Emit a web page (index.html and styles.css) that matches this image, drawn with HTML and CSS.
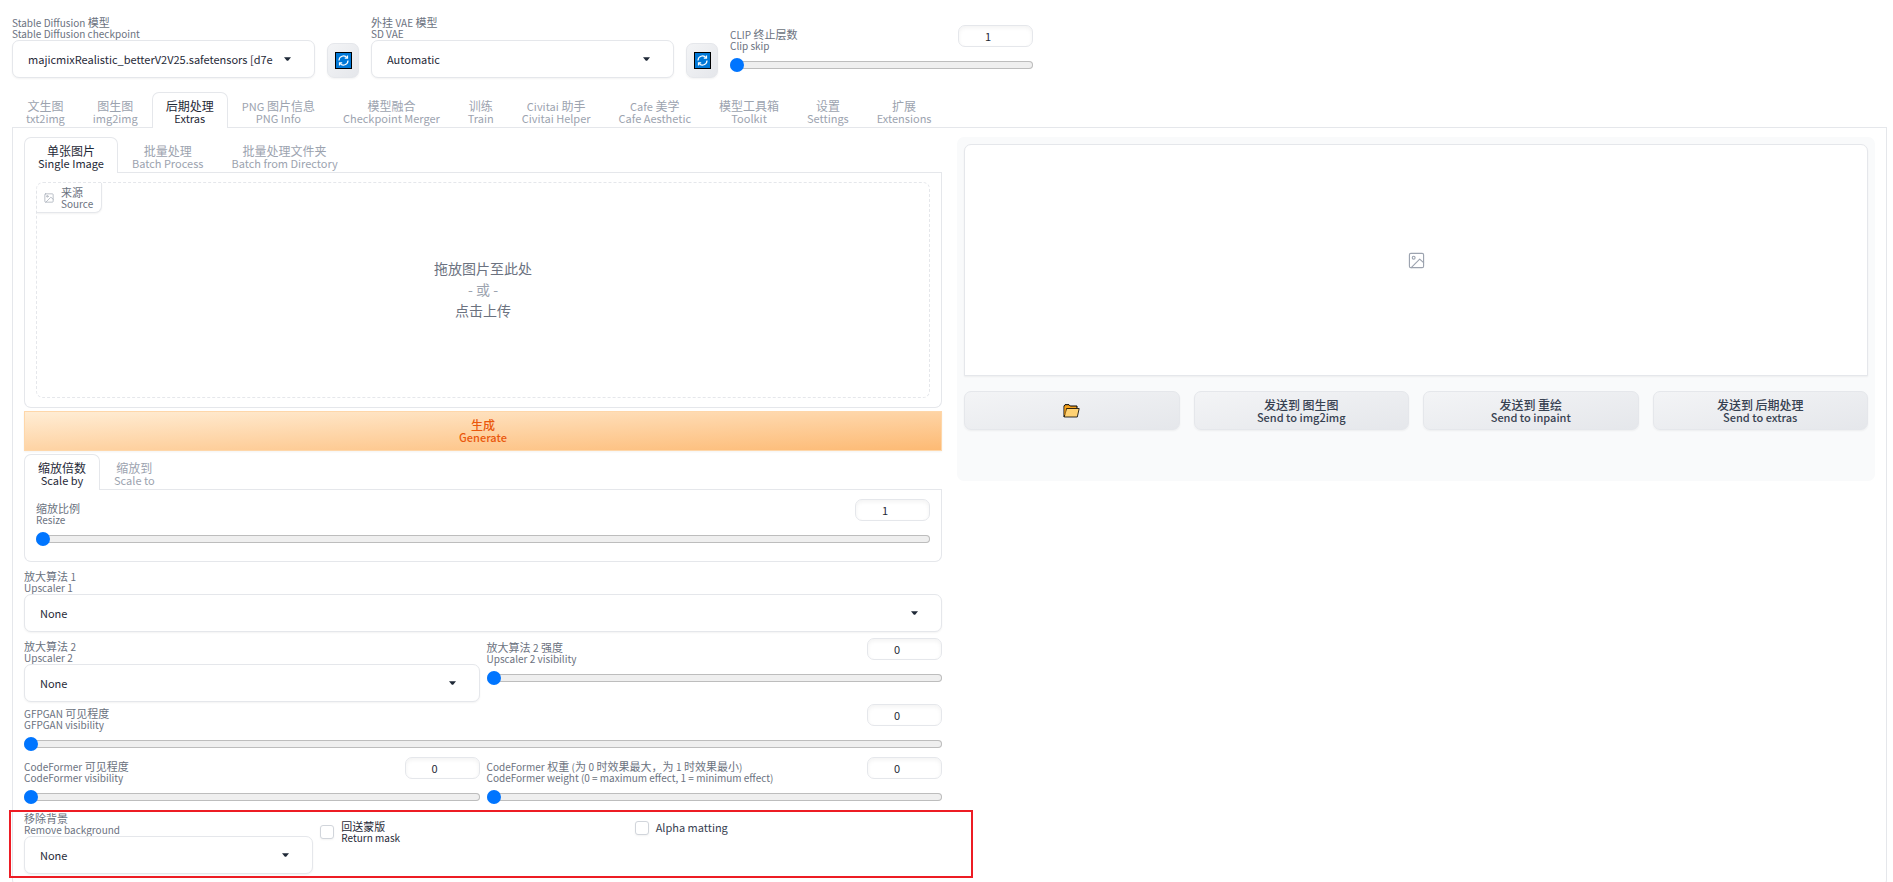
FILE: index.html
```html
<!DOCTYPE html>
<html lang="zh-CN">
<head>
<meta charset="utf-8">
<title>Stable Diffusion</title>
<link rel="stylesheet" href="styles.css">
</head>
<body>
<svg class="defs" aria-hidden="true">
  <symbol id="caret" viewBox="0 0 8 4"><path d="M0 0h8L5 3.6Q4 4.4 3 3.6Z" fill="#1f2937"/></symbol>
  <symbol id="picture" viewBox="0 0 24 24"><g fill="none" stroke="currentColor" stroke-width="1.6" stroke-linecap="round" stroke-linejoin="round"><rect x="2" y="2" width="20" height="20" rx="2"/><circle cx="8" cy="8" r="2"/><path d="M22 15l-5.500-5L4.500 22"/></g></symbol>
  <symbol id="refresh" viewBox="0 0 17 17"><rect x=".5" y=".5" width="16" height="16" fill="#0078d7" stroke="#000"/><g fill="none" stroke="#fff" stroke-width="1.200"><path d="M4 8.500A4.500 4.500 0 0 1 12 5.700"/><path d="M13 8.500A4.500 4.500 0 0 1 5 11.300"/><path d="M12.500 3.500v2.700H9.800M4.500 13.500v-2.700h2.700"/></g></symbol>
  <symbol id="folder" viewBox="0 0 17 14"><path d="M1 13V2l1-1.300h4L7.200 2H14v2.500" fill="#f5a11c" stroke="#000"/><path d="M1.200 13L3.500 4.500h12.700L14.300 13Z" fill="#ffd273" stroke="#000" stroke-width=".8"/><path d="M2 11V2.500" fill="none" stroke="#f5a11c" stroke-width="1"/></symbol>
</svg>

<header class="quick">
  <div class="dropdown quick-field">
    <label class="caption" for="ckpt"><span><i>Stable Diffusion</i> 模型</span><small>Stable Diffusion checkpoint</small></label>
    <div class="select-box"><select id="ckpt"><option>majicmixRealistic_betterV2V25.safetensors [d7e</option></select><svg class="caret"><use href="#caret"/></svg></div>
  </div>
  <button class="tool" aria-label="Refresh checkpoints"><svg><use href="#refresh"/></svg></button>
  <div class="dropdown quick-field">
    <label class="caption" for="vae"><span>外挂 <i>VAE</i> 模型</span><small>SD VAE</small></label>
    <div class="select-box"><select id="vae"><option>Automatic</option></select><svg class="caret"><use href="#caret"/></svg></div>
  </div>
  <button class="tool" aria-label="Refresh VAE"><svg><use href="#refresh"/></svg></button>
  <div class="slider quick-field quick-slider">
    <div class="slider-head"><label class="caption" for="clip"><span><i>CLIP</i> 终止层数</span><small>Clip skip</small></label><input type="number" value="1" aria-label="Clip skip value"></div>
    <input id="clip" type="range" min="1" max="12" value="1">
  </div>
</header>

<nav class="tabs main-tabs">
  <button class="tab"><span>文生图</span><small>txt2img</small></button>
  <button class="tab"><span>图生图</span><small>img2img</small></button>
  <button class="tab selected"><span>后期处理</span><small>Extras</small></button>
  <button class="tab"><span><i>PNG</i> 图片信息</span><small>PNG Info</small></button>
  <button class="tab"><span>模型融合</span><small>Checkpoint Merger</small></button>
  <button class="tab"><span>训练</span><small>Train</small></button>
  <button class="tab"><span><i>Civitai</i> 助手</span><small>Civitai Helper</small></button>
  <button class="tab"><span><i>Cafe</i> 美学</span><small>Cafe Aesthetic</small></button>
  <button class="tab"><span>模型工具箱</span><small>Toolkit</small></button>
  <button class="tab"><span>设置</span><small>Settings</small></button>
  <button class="tab"><span>扩展</span><small>Extensions</small></button>
</nav>

<main class="page">
  <section class="left">
    <div class="tabs">
      <button class="tab selected"><span>单张图片</span><small>Single Image</small></button>
      <button class="tab"><span>批量处理</span><small>Batch Process</small></button>
      <button class="tab"><span>批量处理文件夹</span><small>Batch from Directory</small></button>
    </div>
    <div class="panel upload-panel">
      <div class="upload">
        <div class="badge"><svg><use href="#picture"/></svg><div class="caption"><span>来源</span><small>Source</small></div></div>
        <p>拖放图片至此处</p>
        <p class="or">- 或 -</p>
        <p>点击上传</p>
      </div>
    </div>

    <button class="generate"><span>生成</span><small>Generate</small></button>

    <div class="tabs">
      <button class="tab selected"><span>缩放倍数</span><small>Scale by</small></button>
      <button class="tab"><span>缩放到</span><small>Scale to</small></button>
    </div>
    <div class="panel resize-panel">
      <div class="slider">
        <div class="slider-head"><label class="caption" for="resize"><span>缩放比例</span><small>Resize</small></label><input type="number" value="1" aria-label="Resize value"></div>
        <input id="resize" type="range" min="1" max="8" value="1">
      </div>
    </div>

    <div class="dropdown row">
      <label class="caption" for="up1"><span>放大算法 <i>1</i></span><small>Upscaler 1</small></label>
      <div class="select-box"><select id="up1"><option>None</option></select><svg class="caret"><use href="#caret"/></svg></div>
    </div>

    <div class="row halves">
      <div class="dropdown">
        <label class="caption" for="up2"><span>放大算法 <i>2</i></span><small>Upscaler 2</small></label>
        <div class="select-box"><select id="up2"><option>None</option></select><svg class="caret"><use href="#caret"/></svg></div>
      </div>
      <div class="slider">
        <div class="slider-head"><label class="caption" for="up2v"><span>放大算法 <i>2</i> 强度</span><small>Upscaler 2 visibility</small></label><input type="number" value="0" aria-label="Upscaler 2 visibility value"></div>
        <input id="up2v" type="range" min="0" max="1" value="0">
      </div>
    </div>

    <div class="slider row tight">
      <div class="slider-head"><label class="caption" for="gfp"><span><i>GFPGAN</i> 可见程度</span><small>GFPGAN visibility</small></label><input type="number" value="0" aria-label="GFPGAN visibility value"></div>
      <input id="gfp" type="range" min="0" max="1" value="0">
    </div>

    <div class="row halves">
      <div class="slider">
        <div class="slider-head"><label class="caption" for="cfv"><span><i>CodeFormer</i> 可见程度</span><small>CodeFormer visibility</small></label><input type="number" value="0" aria-label="CodeFormer visibility value"></div>
        <input id="cfv" type="range" min="0" max="1" value="0">
      </div>
      <div class="slider">
        <div class="slider-head"><label class="caption" for="cfw"><span><i>CodeFormer</i> 权重 <i>(</i>为 <i>0</i> 时效果最大，为 <i>1</i> 时效果最小<i>)</i></span><small>CodeFormer weight (0 = maximum effect, 1 = minimum effect)</small></label><input type="number" value="0" aria-label="CodeFormer weight value"></div>
        <input id="cfw" type="range" min="0" max="1" value="0">
      </div>
    </div>

    <div class="row background-row">
      <div class="dropdown">
        <label class="caption" for="rembg"><span>移除背景</span><small>Remove background</small></label>
        <div class="select-box"><select id="rembg"><option>None</option></select><svg class="caret"><use href="#caret"/></svg></div>
      </div>
      <label class="check"><input type="checkbox"><span class="caption"><span>回送蒙版</span><small>Return mask</small></span></label>
      <label class="check"><input type="checkbox"><span class="check-text">Alpha matting</span></label>
      <div class="highlight"></div>
    </div>
  </section>

  <section class="results">
    <div class="gallery"><svg><use href="#picture"/></svg></div>
    <div class="actions">
      <button class="action" aria-label="Open folder"><svg><use href="#folder"/></svg></button>
      <button class="action"><span>发送到 图生图</span><small>Send to img2img</small></button>
      <button class="action"><span>发送到 重绘</span><small>Send to inpaint</small></button>
      <button class="action"><span>发送到 后期处理</span><small>Send to extras</small></button>
    </div>
  </section>
</main>
</body>
</html>
```
FILE: styles.css
```css
* { box-sizing: border-box; }
html { height: 100%; overflow: hidden; }
body {
  margin: 0;
  padding: 14px 6px 0 12px;
  background: #fff;
  color: #1f2937;
  font-family: "Noto Sans CJK SC", sans-serif;
  font-size: 12px;
}
button, input, select { font: inherit; color: inherit; margin: 0; }
p { margin: 0; }
.defs { display: none; }

/* bilingual labels: Latin runs are set one step smaller than the Chinese */
.caption, .tab, .generate, .action { line-height: 12px; }
.caption span, .caption small,
.tab span, .tab small,
.generate span, .generate small,
.action span, .action small { display: block; height: 12px; white-space: nowrap; }
.tab small, .tab i, .generate small, .action small { font-size: 11px; }
.caption { display: block; font-size: 11px; color: #6b7280; }
.caption small, .caption i { font-size: 10px; }
i { font-style: normal; }

/* dropdowns */
.dropdown { padding-top: 2px; }
.select-box { position: relative; }
.select-box select {
  display: block;
  width: 100%;
  height: 38px;
  padding: 0 38px 0 15px;
  border: 1px solid #e5e7eb;
  border-radius: 7px;
  background: #fff;
  box-shadow: 0 1px 2px rgba(0, 0, 0, .05);
  font-size: 11px;
  appearance: none;
}
.caret {
  position: absolute;
  top: 17px;
  right: 24px;
  width: 7px;
  height: 4px;
  pointer-events: none;
}

/* sliders */
.slider-head {
  display: flex;
  justify-content: space-between;
  align-items: flex-start;
}
.slider-head .caption { padding: 3px 0 6px; }
input[type="number"] {
  width: 75px;
  height: 22px;
  padding: 0 6px;
  border: 1px solid #e5e7eb;
  border-radius: 7px;
  background: #fff;
  box-shadow: inset 0 2px 4px rgba(0, 0, 0, .05);
  font-size: 11px;
  text-align: center;
}
input[type="number"]::-webkit-inner-spin-button { opacity: 0; }
input[type="range"] {
  display: block;
  width: 100%;
  height: 14px;
  background: none;
  appearance: none;
}
input[type="range"]::-webkit-slider-runnable-track {
  height: 8px;
  border-radius: 4px;
  background: #efefef;
  box-shadow: inset 0 0 0 1px #bdbdbd;
}
input[type="range"]::-webkit-slider-thumb {
  width: 14px;
  height: 14px;
  margin-top: -3px;
  border-radius: 50%;
  background: #0075ff;
  appearance: none;
}

/* quick settings */
.quick { display: flex; align-items: flex-end; gap: 12px; margin-bottom: 14px; }
.quick-field { width: 303px; }
.quick-slider { align-self: flex-start; padding-top: 11px; }
.tool {
  display: flex;
  align-items: center;
  justify-content: center;
  width: 32px;
  height: 35px;
  padding: 0;
  border: 1px solid #e5e7eb;
  border-radius: 7px;
  background: linear-gradient(to bottom right, #f3f4f6, #e5e7eb);
  box-shadow: 0 1px 2px rgba(0, 0, 0, .05);
}
.tool svg { width: 17px; height: 17px; }

/* tabs */
.tabs { display: flex; border-bottom: 1px solid #e5e7eb; }
.tab {
  margin-bottom: -1px;
  padding: 7px 13px 4px;
  border: 1px solid transparent;
  border-bottom: 0;
  border-radius: 7px 7px 0 0;
  background: none;
  color: #9ca3af;
  text-align: center;
}
.tab.selected { border-color: #e5e7eb; background: #fff; color: #1f2937; }

/* page */
.page {
  display: grid;
  grid-template-columns: 1fr 1fr;
  gap: 15px;
  align-items: start;
  padding: 9px 11px 12px;
  border: 1px solid #e5e7eb;
  border-top: 0;
  border-radius: 0 0 7px 7px;
}
.left { min-width: 0; }
.panel {
  padding: 9px 11px;
  border: 1px solid #e5e7eb;
  border-top: 0;
  border-radius: 0 0 7px 7px;
}
.upload {
  position: relative;
  display: flex;
  flex-direction: column;
  align-items: center;
  justify-content: center;
  height: 216px;
  padding-bottom: 2px;
  border: 1px dashed #e5e7eb;
  border-radius: 7px;
  color: #6b7280;
  font-size: 14px;
  line-height: 21px;
}
.upload .or { color: #9ca3af; }
.badge {
  position: absolute;
  top: 0;
  left: 0;
  display: flex;
  align-items: center;
  gap: 7px;
  height: 30px;
  padding: 0 8px 0 7px;
  border: 1px solid #e5e7eb;
  border-width: 0 1px 1px 0;
  border-radius: 7px 0 7px 0;
  background: #fff;
  box-shadow: 0 1px 2px rgba(0, 0, 0, .05);
}
.badge svg { width: 10px; height: 10px; color: #9ca3af; }
.generate {
  display: block;
  width: 100%;
  height: 40px;
  margin: 3px 0;
  padding: 0;
  border: 1px solid #fed7aa;
  background: linear-gradient(to bottom right, #ffedd5, #fdba74);
  box-shadow: 0 1px 2px rgba(0, 0, 0, .05);
  color: #ea580c;
  font-weight: 500;
}
.resize-panel { padding-bottom: 15px; }
.row { margin-top: 6px; }
.row.tight { margin-top: 2px; }
.halves { display: grid; grid-template-columns: 1fr 1fr; gap: 7px; }
.background-row {
  position: relative;
  display: grid;
  grid-template-columns: 289fr 307fr 307fr;
  gap: 7px;
}
.check { display: flex; align-items: center; align-self: start; gap: 7px; padding-top: 10px; }
.check .caption { color: #1f2937; }
.check-text { font-size: 11px; line-height: 15px; color: #374151; }
.check input {
  width: 14px;
  height: 14px;
  border: 1px solid #d1d5db;
  border-radius: 3px;
  background: #fff;
  box-shadow: 0 1px 2px rgba(0, 0, 0, .05);
  appearance: none;
}
.highlight {
  position: absolute;
  inset: 0 -31px -4px -15px;
  border: 2px solid #ed1c24;
  pointer-events: none;
}

/* results */
.results { min-width: 0; padding: 7px 7px 51px; border-radius: 7px; background: #f9fafb; }
.gallery {
  display: flex;
  align-items: center;
  justify-content: center;
  height: 232px;
  border: 1px solid #e5e7eb;
  border-radius: 7px 7px 0 0;
  background: #fff;
  box-shadow: 0 1px 2px rgba(0, 0, 0, .05);
  color: #9ca3af;
}
.gallery svg { width: 17px; height: 17px; }
.actions { display: grid; grid-template-columns: repeat(4, 1fr); gap: 14px; margin-top: 15px; }
.action {
  height: 39px;
  padding: 0;
  border: 1px solid #e5e7eb;
  border-radius: 7px;
  background: linear-gradient(to bottom right, #f3f4f6, #e5e7eb);
  box-shadow: 0 1px 2px rgba(0, 0, 0, .05);
  color: #374151;
  font-weight: 500;
}
.action svg { width: 17px; height: 14px; vertical-align: middle; }
```
